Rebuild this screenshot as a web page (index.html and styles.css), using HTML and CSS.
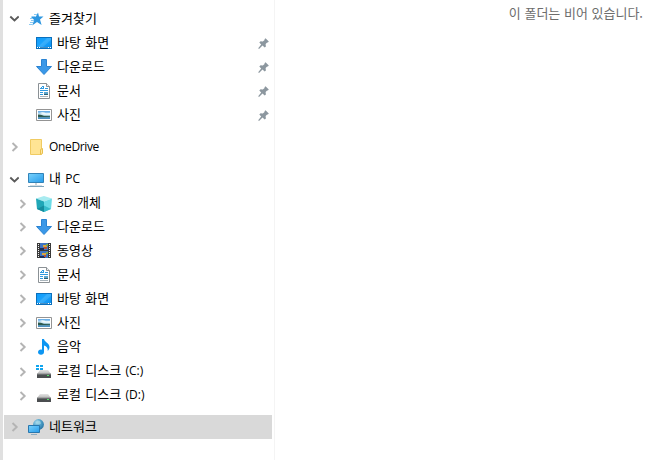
FILE: index.html
```html
<!DOCTYPE html>
<html lang="ko">
<head>
    <meta charset="UTF-8">
    <meta name="viewport" content="width=device-width, initial-scale=1.0">
    <title>네트워크</title>
    <link rel="stylesheet" href="styles.css">
</head>
<body>
    <svg class="defs" width="0" height="0">
        <defs>
            <linearGradient id="blue" x1="0" y1="0" x2="1" y2="1">
                <stop offset="0" stop-color="#0d9bfb"/>
                <stop offset="0.5" stop-color="#1da4fc"/>
                <stop offset="1" stop-color="#0b91f0"/>
            </linearGradient>
            <linearGradient id="screen" x1="0" y1="0" x2="1" y2="1">
                <stop offset="0" stop-color="#79d2fc"/>
                <stop offset="1" stop-color="#269bea"/>
            </linearGradient>
            <linearGradient id="sky" x1="0" y1="0" x2="0" y2="1">
                <stop offset="0" stop-color="#5aa5e4"/>
                <stop offset="0.45" stop-color="#d5edf7"/>
                <stop offset="0.7" stop-color="#5f97a8"/>
                <stop offset="1" stop-color="#4a90c8"/>
            </linearGradient>
            <linearGradient id="disk" x1="0" y1="0" x2="0" y2="1">
                <stop offset="0" stop-color="#e4e4e4"/>
                <stop offset="1" stop-color="#b5b5b5"/>
            </linearGradient>
            <radialGradient id="globe" cx="0.35" cy="0.3" r="0.8">
                <stop offset="0" stop-color="#a9dcf0"/>
                <stop offset="0.5" stop-color="#4c9fc8"/>
                <stop offset="1" stop-color="#246f9e"/>
            </radialGradient>
        </defs>
        <symbol id="open" viewBox="0 0 10 10">
            <path d="M1.300 2.500l4.200 4 4.200-4" fill="none" stroke="#5a5a5a" stroke-width="1.9"/>
        </symbol>
        <symbol id="closed" viewBox="0 0 10 10">
            <path d="M3.500 1l4.200 4-4.200 4" fill="none" stroke="#b4b4b4" stroke-width="1.9"/>
        </symbol>
        <symbol id="pin" viewBox="0 0 11 11">
            <path d="M7.500.3L10.800 3.600l-.9 1-.8-.1-1.500 1.600.3 2.500-1.200 1L4.500 7.600 1 10.900l-.8-.6 3-3.800L1.300 4.400l1.300-1.200 2.200.3L6.600 2l-.1-.8z" fill="#8c979f"/>
        </symbol>
        <symbol id="star" viewBox="0 0 16 16">
            <path d="M10 1.500l1 4h4.500l-3.500 3 1.600 5.500-4.600-3-4.800 3.500 2-5.500L3 6l4.800-.3z" fill="#2f97e0"/>
            <path d="M6 3.500h3M3.500 5.500h4M2 7.500h3M3 9.500h3M2 11.500h3M1 13.500h3" stroke="#8bcaf2" stroke-width="1"/>
        </symbol>
        <symbol id="desktop" viewBox="0 0 16 16">
            <path d="M0 2h16v12H0z" fill="#0a70bd"/>
            <path d="M1 3h14v9H1z" fill="url(#blue)"/>
            <path d="M11 3h4v2l-8 7H2z" fill="#fff" opacity=".12"/>
            <path d="M1 12h14v1H1z" fill="#0869b0"/>
            <path d="M1 12h1v1H1zM3 12h9v1H3zM13 12h2v1h-2z" fill="#fff" opacity=".25"/>
            <path d="M1 12h1v1H1zM3 12h1v1H3zM12 12h1v1h-1zM14 12h1v1h-1z" fill="#fff"/>
        </symbol>
        <symbol id="download" viewBox="0 0 16 16">
            <path d="M5.500.5h5v7h5L8 15.500.5 7.500h5z" fill="#3a98e8" stroke="#2a83d2"/>
        </symbol>
        <symbol id="document" viewBox="0 0 16 16">
            <path d="M2.500.5h8l3 3v12h-11z" fill="#fff" stroke="#8b9195"/>
            <path d="M10.500.5v3h3" fill="#eee" stroke="#8b9195"/>
            <path d="M6 3.500h2M5 4.500h1M7 4.500h1M4 5.500h4M9 5.500h3M4 7.500h8" stroke="#2f9ae0"/>
            <path d="M4 9.500h3M4 11.500h3" stroke="#2f9ae0"/>
            <path d="M4 13.500h8" stroke="#a9b4bb"/>
            <path d="M8 9h4v3H8z" fill="#5aa5cf"/>
            <path d="M8 11h4v1H8z" fill="#2c6274"/>
        </symbol>
        <symbol id="picture" viewBox="0 0 16 16">
            <path d="M.5 2.500h15v11H.5z" fill="#fff" stroke="#949494"/>
            <path d="M2 4h12v8H2z" fill="url(#sky)"/>
            <path d="M2 7.500l3 .3 3 1.200 6 .2v.8H2z" fill="#2d594d"/>
            <path d="M4 6c2-1.500 4-.5 6 .2l4-.2v2L8 7.500z" fill="#eef8fa"/>
        </symbol>
        <symbol id="folder" viewBox="0 0 16 16">
            <path d="M2.500.5h11v15h-11z" fill="#ffe494" stroke="#f0cb62"/>
            <path d="M12.500 10.500l2-1v5l-2 1z" fill="#ffe79f" stroke="#e9c04e"/>
        </symbol>
        <symbol id="computer" viewBox="0 0 16 16">
            <path d="M.5 1.500h15v9H.5z" fill="url(#screen)" stroke="#3283b8"/>
            <path d="M7 11h2v2H7z" fill="#cbd5db"/>
            <path d="M2 13h12v1H2z" fill="#d5dfe5"/>
            <path d="M0 14h16v1H0z" fill="#7fa5bb"/>
        </symbol>
        <symbol id="cube" viewBox="0 0 16 16">
            <path d="M0 2.500L8 0l8 2.500-8 3z" fill="#a8ebf0"/>
            <path d="M0 2.500l8 3V16l-7-3z" fill="#20a7b7"/>
            <path d="M16 2.500l-8 3V16l7-3z" fill="#6bdbe6"/>
            <path d="M1 13l7-3.500V16z" fill="#168d9e"/>
            <path d="M15 13L8 9.500V16z" fill="#36bccb"/>
        </symbol>
        <symbol id="video" viewBox="0 0 16 16">
            <path d="M1 0h14v15H1z" fill="#393939"/>
            <path d="M4 0h8v7H4zM4 8h8v7H4z" fill="#3f74c2"/>
            <path d="M4 5h4v2H4zM4 13h5v2H4z" fill="#1b2e58"/>
            <path d="M7 2h4v2H7zM6 10h4v2H6z" fill="#d9a53e"/>
            <path d="M8 4h3v2H8zM8 12h2v2H8z" fill="#b8503a"/>
            <path d="M10 1h2v2h-2zM10 9h2v2h-2z" fill="#7da94a"/>
            <path d="M2.500 1v14M13.500 1v14" stroke="#f3f3f3" stroke-dasharray="1 1"/>
        </symbol>
        <symbol id="music" viewBox="0 0 16 16">
            <path d="M6 0h2c.3 3 5.500 4 5.500 8 0 1.800-.8 3-1.800 4 .4-3-1-4.800-3.700-5.500V13c0 1.700-1.300 2.800-3 2.800S2 14.800 2 13.300s1.300-2.800 2.800-2.800c.5 0 .9.1 1.200.3z" fill="#0d96f2"/>
        </symbol>
        <symbol id="drive" viewBox="0 0 16 16">
            <path d="M4 6h8l3 4H1z" fill="url(#disk)"/>
            <path d="M1 10h14v4H1z" fill="#4b4e50"/>
            <path d="M1 9.500h14v1H1z" fill="#8a8d8f"/>
            <path d="M11 11h2v1h-2z" fill="#55e36c"/>
        </symbol>
        <symbol id="system" viewBox="0 0 16 16">
            <use href="#drive"/>
            <path d="M0 1h3v2H0zM4 1h3v2H4zM0 4h3v2H0zM4 4h3v2H4z" fill="#12a5ee"/>
        </symbol>
        <symbol id="network" viewBox="0 0 16 16">
            <circle cx="10.500" cy="5.500" r="5.400" fill="url(#globe)"/>
            <path d="M9 1.500l3 .5 1 2.500-2 1-3-1z" fill="#a5d5e5" opacity=".7"/>
            <path d="M.5 6.500h11v7H.5z" fill="url(#screen)" stroke="#2877ae"/>
            <path d="M3 15h6v1H3z" fill="#8dabc0"/>
        </symbol>
    </svg>

    <div class="window">
        <nav class="sidebar">
            <div class="group">
                <div class="row"><svg class="arrow"><use href="#open"/></svg><svg class="icon"><use href="#star"/></svg><span class="name">즐겨찾기</span></div>
                <div class="row child"><svg class="icon"><use href="#desktop"/></svg><span class="name">바탕 화면</span><svg class="pin"><use href="#pin"/></svg></div>
                <div class="row child"><svg class="icon"><use href="#download"/></svg><span class="name">다운로드</span><svg class="pin"><use href="#pin"/></svg></div>
                <div class="row child"><svg class="icon"><use href="#document"/></svg><span class="name">문서</span><svg class="pin"><use href="#pin"/></svg></div>
                <div class="row child"><svg class="icon"><use href="#picture"/></svg><span class="name">사진</span><svg class="pin"><use href="#pin"/></svg></div>
            </div>
            <div class="group">
                <div class="row"><svg class="arrow"><use href="#closed"/></svg><svg class="icon"><use href="#folder"/></svg><span class="latin onedrive">OneDrive</span></div>
            </div>
            <div class="group">
                <div class="row"><svg class="arrow"><use href="#open"/></svg><svg class="icon"><use href="#computer"/></svg><span class="name">내 <span class="latin">PC</span></span></div>
                <div class="row child"><svg class="arrow"><use href="#closed"/></svg><svg class="icon"><use href="#cube"/></svg><span class="name"><span class="latin">3D</span> 개체</span></div>
                <div class="row child"><svg class="arrow"><use href="#closed"/></svg><svg class="icon"><use href="#download"/></svg><span class="name">다운로드</span></div>
                <div class="row child"><svg class="arrow"><use href="#closed"/></svg><svg class="icon"><use href="#video"/></svg><span class="name">동영상</span></div>
                <div class="row child"><svg class="arrow"><use href="#closed"/></svg><svg class="icon"><use href="#document"/></svg><span class="name">문서</span></div>
                <div class="row child"><svg class="arrow"><use href="#closed"/></svg><svg class="icon"><use href="#desktop"/></svg><span class="name">바탕 화면</span></div>
                <div class="row child"><svg class="arrow"><use href="#closed"/></svg><svg class="icon"><use href="#picture"/></svg><span class="name">사진</span></div>
                <div class="row child"><svg class="arrow"><use href="#closed"/></svg><svg class="icon"><use href="#music"/></svg><span class="name">음악</span></div>
                <div class="row child"><svg class="arrow"><use href="#closed"/></svg><svg class="icon"><use href="#system"/></svg><span class="name">로컬 디스크 <span class="latin">(C:)</span></span></div>
                <div class="row child"><svg class="arrow"><use href="#closed"/></svg><svg class="icon"><use href="#drive"/></svg><span class="name">로컬 디스크 <span class="latin">(D:)</span></span></div>
            </div>
            <div class="group">
                <div class="row selected"><svg class="arrow"><use href="#closed"/></svg><svg class="icon"><use href="#network"/></svg><span class="name">네트워크</span></div>
            </div>
        </nav>
        <main class="content">
            <p class="empty">이 폴더는 비어 있습니다.</p>
        </main>
    </div>
</body>
</html>
```
FILE: styles.css
```css
* {
    box-sizing: border-box;
}
body {
    margin: 0;
    background-color: #ffffff;
    color: #000000;
    font-family: "Noto Sans CJK KR", sans-serif;
    font-size: 13px;
    overflow: hidden;
}
.defs {
    display: block;
}
.window {
    display: flex;
    height: 460px;
}
.sidebar {
    width: 275px;
    padding: 7px 2px 0 1px;
    border-left: 3px solid #e0e0e0;
    border-right: 1px solid #f4f4f4;
}
.group {
    margin-bottom: 8px;
}
.row {
    display: grid;
    grid-template-columns: 14px 16px 1fr auto;
    column-gap: 5px;
    align-items: center;
    height: 24px;
    padding-left: 5px;
    line-height: 24px;
    white-space: nowrap;
}
.child {
    padding-left: 13px;
}
.selected {
    background-color: #d9d9d9;
}
.arrow {
    grid-column: 1;
    width: 10px;
    height: 10px;
}
.icon {
    grid-column: 2;
    width: 16px;
    height: 16px;
}
.name {
    padding-bottom: 2px;
    line-height: 22px;
    word-spacing: 0.7px;
}
.pin {
    width: 11px;
    height: 11px;
    margin-right: 3px;
}
.latin {
    font-family: "Open Sans", "Noto Sans", sans-serif;
    font-size: 12px;
}
.onedrive {
    letter-spacing: -0.35px;
}
.content {
    flex: 1;
    padding: 1px 24px;
}
.empty {
    margin: 0;
    color: #6d6d6d;
    line-height: 24px;
    text-align: right;
    white-space: nowrap;
}
```
